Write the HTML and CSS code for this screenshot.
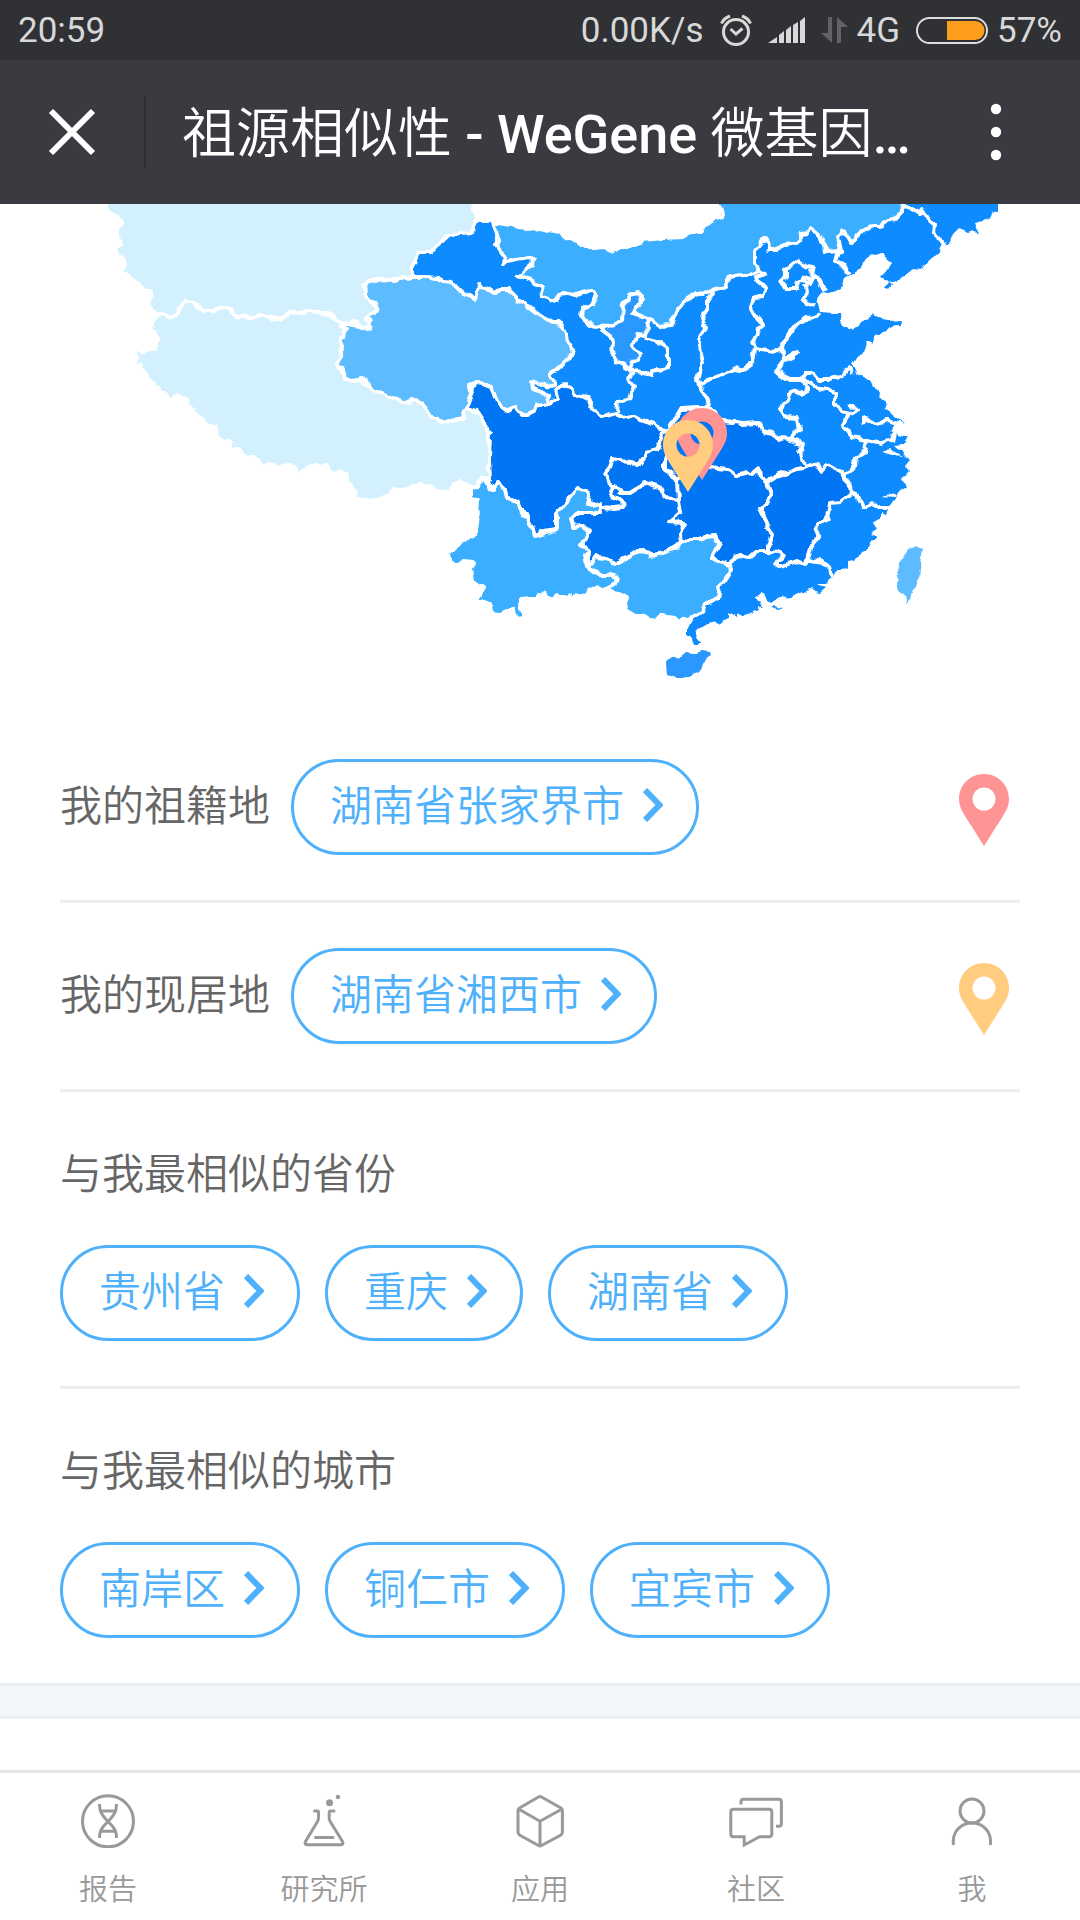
FILE: index.html
```html
<!DOCTYPE html>
<html lang="zh-CN">
<head>
  <meta charset="UTF-8">
  <meta name="viewport" content="width=device-width, initial-scale=1">
  <title>祖源相似性 - WeGene 微基因</title>
  <link rel="stylesheet" href="styles.css">
</head>
<body>
  <svg class="defs" aria-hidden="true">
    <symbol id="pin" viewBox="0 0 50 72">
      <path fill="currentColor" fill-rule="evenodd" d="M25 0C11 0 0 11 0 25C0 32 3 37 6 42L25 72L44 42C47 37 50 32 50 25C50 11 39 0 25 0ZM25 13.500A11.500 11.500 0 1 1 25 36.500A11.500 11.500 0 1 1 25 13.500Z"/>
    </symbol>
    <symbol id="chevron" viewBox="0 0 20 34">
      <path fill="none" stroke="currentColor" stroke-width="6" d="M2 2L16.500 17L2 32"/>
    </symbol>
    <!-- rough edges for coast and borders -->
    <filter id="rough" x="0" y="0" width="1" height="1">
      <feTurbulence type="fractalNoise" baseFrequency="0.12" numOctaves="1" seed="4"/>
      <feDisplacementMap in="SourceGraphic" scale="8" xChannelSelector="R" yChannelSelector="G"/>
    </filter>
  </svg>

  <div class="status">
    <span>20:59</span>
    <div class="status-right">
      <span>0.00K/s</span>
      <svg width="32" height="32" viewBox="0 0 32 32" fill="none" stroke="#d8d8d8" stroke-width="3">
        <circle cx="16" cy="18" r="12.500"/>
        <path d="M10.500 15L16 20L22.500 14.500"/>
        <path d="M1.500 9.500C3 6 6 3.500 10 2M30.500 9.500C29 6 26 3.500 22 2"/>
      </svg>
      <svg width="37" height="26" viewBox="0 0 37 26" fill="#d8d8d8">
        <path d="M0 26L9 20V26ZM11 26V18L16 14V26ZM18 26V13L23 9V26ZM25 26V8L30 5V26ZM32 26V4L37 0V26Z"/>
      </svg>
      <div class="status-group">
        <svg width="27" height="26" viewBox="0 0 27 26" fill="#626366">
          <path d="M7 0H11V26L0 16H7ZM16 26V0L27 10H20V26Z"/>
        </svg>
        <span>4G</span>
      </div>
      <div class="status-group">
        <svg width="72" height="27" viewBox="0 0 72 27">
          <rect x="1" y="1" width="70" height="25" rx="12.500" fill="none" stroke="#dcdedb" stroke-width="2"/>
          <path fill="#ff9d1c" d="M31 4H59A9.500 9.500 0 0 1 59 23H31Z"/>
        </svg>
        <span>57%</span>
      </div>
    </div>
  </div>

  <header class="topbar">
    <button class="close" aria-label="关闭">
      <svg width="48" height="48" viewBox="0 0 48 48" stroke="#fff" stroke-width="6"><path d="M3 3L45 45M45 3L3 45"/></svg>
    </button>
    <h1>祖源相似性 <b>- WeGene</b> 微基因<b>…</b></h1>
    <button class="more" aria-label="更多">
      <svg width="12" height="58" viewBox="0 0 12 58" fill="#fff"><circle cx="6" cy="6" r="5.200"/><circle cx="6" cy="29" r="5.200"/><circle cx="6" cy="52" r="5.200"/></svg>
    </button>
  </header>

  <main>
    <svg class="map" viewBox="0 204 1080 510" role="img" aria-label="祖源相似性地图">
      <g filter="url(#rough)">
      <!-- east, north-west corridor and coast -->
      <path class="lv4 plain" d="M413 277L413 265L418 253L430 253L447 237L472 233L475 222L494 222L520 250L600 270L700 260L800 225L900 196L998 196L998 204L997 210L993 212L990 218L983 221L975 223L977 228L979 232L973 231L968 233L958 229L953 234L950 242L944 247L933 257L925 264L922 270L913 269L908 273L897 280L893 282L884 281L881 277L887 270L892 262L886 257L882 254L877 256L870 255L866 259L862 268L855 272L845 278L841 288L833 292L828 293L822 292L817 298L818 306L822 312L833 313L840 313L842 318L841 327L850 330L860 327L861 322L867 319L873 315L881 319L887 321L902 320L901 327L895 325L887 329L880 334L874 335L872 344L866 341L865 348L857 358L853 365L858 375L865 378L872 382L877 392L885 404L886 410L894 415L904 423L896 425L890 431L898 435L908 438L903 444L894 445L900 450L905 456L911 460L905 467L909 472L903 478L907 486L900 490L896 497L888 508L885 515L880 513L880 519L873 523L877 529L870 533L877 536L870 545L865 552L860 553L855 561L847 562L847 567L841 570L833 577L829 579L825 584L818 584L826 587L820 592L810 590L800 593L792 597L780 598L773 602L767 600L763 594L758 596L755 598L764 606L758 606L758 611L743 617L738 612L736 617L730 612L730 619L718 623L711 622L703 626L698 630L694 633L697 638L701 643L695 643L691 638L688 635L688 628L692 620L700 580L600 540L520 450L490 370Z"/>
      <path class="lv4 plain" d="M885 288L889 282L892 284L889 288Z"/>

      <!-- Xinjiang -->
      <path class="lv0" d="M107 194L107 214L112 215L117 217L122 223L119 229L118 236L120 243L117 246L105 245L115 249L119 256L124 260L125 266L122 271L129 276L133 281L140 286L146 290L151 290L149 306L154 311L158 315L166 315L172 318L177 313L178 309L187 301L191 304L198 307L204 311L213 311L217 308L223 307L231 309L233 314L240 316L250 318L257 316L267 316L275 318L283 318L290 313L300 312L312 312L323 314L332 316L338 321L345 324L353 322L361 326L369 329L371 322L367 318L369 314L378 311L376 306L373 302L366 295L365 284L373 281L388 280L400 279L413 277L413 265L418 253L430 253L436 246L447 237L460 234L472 233L473 226L475 222L479 218L472 210L471 194Z"/>
      <!-- Tibet -->
      <path class="lv0" d="M158 315L166 315L172 318L177 313L178 309L187 301L191 304L198 307L204 311L213 311L217 308L223 307L231 309L233 314L240 316L250 318L257 316L267 316L275 318L283 318L290 313L300 312L312 312L323 314L332 316L338 321L345 324L342 327L347 330L344 335L339 338L342 347L341 357L337 362L341 368L345 377L352 381L363 379L366 384L373 391L382 393L390 396L398 400L407 402L417 400L423 404L428 410L432 418L443 422L448 420L453 421L463 417L467 408L478 412L485 423L486 429L490 433L489 460L490 480L483 478L478 486L470 487L460 481L453 487L450 492L445 494L430 487L420 485L408 489L395 491L390 493L380 500L364 499L353 499L355 491L352 485L346 484L347 476L338 473L330 472L325 466L318 465L308 467L293 478L296 470L292 465L278 466L265 465L259 460L250 457L248 460L243 455L239 449L231 449L231 443L223 442L216 434L217 428L212 425L205 425L203 419L193 412L187 402L182 397L174 395L168 401L164 394L155 387L155 383L145 376L140 366L134 365L138 358L135 350L137 346L143 352L155 349L158 338L151 330L152 321Z"/>
      <!-- Qinghai -->
      <path class="lv1" d="M345 324L353 325L361 326L369 329L371 322L367 318L369 314L378 311L376 306L373 302L366 295L365 284L373 281L388 280L400 279L413 277L425 277L438 278L443 281L452 282L458 289L463 293L470 296L476 300L479 285L486 288L495 293L500 290L508 290L518 300L527 306L530 307L542 316L553 322L558 322L565 330L568 342L573 350L570 357L567 360L558 368L549 375L555 383L547 387L532 381L533 389L540 391L547 397L548 403L537 405L535 412L523 416L515 407L511 408L508 411L497 402L491 387L484 384L477 383L470 385L472 393L468 402L467 408L463 417L453 421L448 420L443 422L432 418L428 410L423 404L417 400L407 402L398 400L390 396L382 393L373 391L366 384L363 379L352 381L345 377L341 368L337 362L341 357L342 347L339 338L344 335L347 330L342 326Z"/>
      <!-- Inner Mongolia -->
      <path class="lv2" d="M493 222L510 225L527 228L537 227L548 230L560 232L567 238L580 242L593 248L603 247L613 251L628 245L643 240L663 238L683 237L692 233L700 232L710 222L723 215L722 210L717 204L717 194L902 194L903 212L896 218L887 221L880 226L873 226L860 233L856 237L852 243L848 238L842 232L838 237L841 251L826 252L825 246L821 238L817 233L811 229L808 233L800 234L800 241L792 244L785 245L775 250L769 250L768 239L760 243L754 252L754 260L759 271L750 275L742 275L730 277L725 287L712 290L704 295L695 293L689 299L683 303L677 310L675 315L672 325L658 326L650 320L642 317L633 313L638 306L642 300L638 293L630 295L624 304L622 321L612 325L600 327L595 328L582 317L583 308L592 304L597 297L593 290L585 291L577 295L568 293L560 295L555 302L543 296L542 287L529 280L518 276L526 270L533 265L534 259L530 258L515 260L503 263L504 257L497 245L499 241Z"/>
      <!-- Ningxia -->
      <path class="lv3" d="M602 328L612 325L622 321L623 307L630 295L638 293L642 300L633 313L642 317L650 320L647 325L646 335L636 334L633 347L639 353L638 360L633 361L630 368L618 363L612 355L613 342L610 336L602 330Z"/>
      <!-- Sichuan, Chongqing, Guizhou, Hubei, Hunan, Jiangxi -->
      <path class="lv5" d="M467 408L468 402L472 393L470 385L477 383L484 384L491 387L497 402L508 411L511 408L515 407L523 416L535 412L537 405L548 403L558 400L555 389L567 384L573 393L580 396L589 397L592 410L602 417L615 413L622 418L633 416L640 420L647 422L658 427L667 430L675 420L682 408L697 407L710 407L717 416L725 422L742 424L758 423L762 432L773 434L780 438L788 439L802 443L800 453L803 460L806 467L817 463L820 471L827 465L835 469L842 472L845 480L851 486L852 493L840 502L830 503L827 517L818 523L817 538L810 548L807 560L805 564L798 561L790 563L780 567L774 563L785 556L780 553L768 552L755 552L748 558L740 556L735 558L730 565L720 562L712 558L716 550L720 543L717 541L715 535L708 536L700 539L690 539L682 543L674 548L663 553L650 556L645 551L637 550L628 556L617 563L605 559L597 558L587 567L588 552L582 543L589 532L583 526L573 527L571 517L578 513L600 513L602 503L590 505L587 490L577 489L568 500L557 513L557 530L545 532L535 535L528 520L517 502L508 498L504 489L499 481L492 490L488 483L490 480L489 460L490 433L486 429L485 423L478 412Z"/>
      <!-- Yunnan -->
      <path class="lv2" d="M470 487L478 486L483 478L488 483L492 490L499 481L504 489L508 498L517 502L528 520L535 535L545 532L557 530L557 513L568 500L577 489L587 490L590 505L602 503L600 513L578 513L571 517L573 527L583 526L589 532L582 543L588 552L585 560L587 567L600 575L609 575L617 577L615 584L604 590L598 587L587 593L586 596L579 595L572 600L568 595L562 599L557 596L552 600L546 595L540 594L537 598L530 598L523 599L520 603L523 619L516 620L513 610L500 614L491 610L490 604L477 600L484 587L473 582L471 569L474 563L463 562L451 565L449 553L455 547L463 541L475 533L478 501L470 497Z"/>
      <!-- Guangxi -->
      <path class="lv2" d="M587 567L597 558L605 559L617 563L628 556L637 550L645 551L650 556L663 553L674 548L682 543L690 539L700 539L708 536L715 535L717 541L720 543L716 550L712 558L720 562L730 565L731 570L726 578L720 587L718 597L705 605L702 611L693 617L685 618L680 622L675 618L667 617L663 616L657 618L650 621L643 616L635 616L625 610L627 598L620 595L604 590L615 584L617 577L609 575L600 575Z"/>
      <!-- Hainan, Taiwan, Hong Kong -->
      <path class="lv3 plain" d="M666 663L673 657L680 656L685 653L692 654L702 651L710 652L711 655L706 658L703 664L697 673L690 677L683 680L676 678L667 675Z"/>
      <path class="lv1 plain" d="M917 546L923 548L922 556L919 567L918 581L915 588L910 594L909 603L905 597L899 592L896 583L898 578L896 572L900 564L905 555L908 549Z"/>
      <path class="lv3 plain" d="M771 608L775 605L783 607L780 609Z"/>

      <!-- borders between provinces of the same level -->
      <g class="borders">
        <path d="M902 205L911 208L920 214L923 210L929 220L935 225L934 233L940 239L944 244L941 250"/>
        <path d="M838 251L835 261L841 264L846 269L850 274"/>
        <path d="M759 271L765 274L756 277L757 281L766 287L763 297L755 298L751 308L755 315L762 325L758 333L752 343L755 348L768 350L783 352L782 345L788 336L793 329L798 323L806 318L817 317L820 312"/>
        <path d="M755 348L753 363L742 370L733 369L725 373L712 379L698 383"/>
        <path d="M713 292L708 300L708 308L702 317L705 327L699 340L701 352L703 363L697 382L703 393L707 397L710 403L705 408L682 409"/>
        <path d="M783 352L784 360L790 356L797 352L793 357L784 361L776 372L790 380L802 380L805 373L812 373L818 380L828 380L833 377L837 380L843 377L846 369L850 367L852 373"/>
        <path d="M802 380L808 391L800 393L792 390L788 400L780 410L786 417L797 418L799 430L790 438"/>
        <path d="M803 378L815 387L828 389L835 393L835 403L841 411L849 413L843 425L853 437L867 440L882 443L892 440L895 430"/>
        <path d="M849 407L854 406L857 411L851 415"/>
        <path d="M864 423L866 418L877 424L887 421L904 425"/>
        <path d="M867 440L865 452L856 458L855 467L842 475"/>
        <path d="M852 493L857 495L862 507L868 507L873 503L878 508L890 508"/>
        <path d="M808 559L822 562L829 568L832 577"/>
        <path d="M803 278L797 282L799 288L785 288L781 281L785 277L785 270L798 260L806 266L813 267L811 274L818 278L825 291"/>
        <path d="M803 279L812 278L809 284L801 280M805 285L807 292L803 300L808 303L815 306"/>
        <path d="M646 337L656 341L668 348L668 368L653 371L652 375L643 373L633 372L629 380L633 387L630 400L618 402L617 412M630 368L633 372"/>
        <path d="M667 430L663 433L657 450L647 453L638 466L630 462L620 461L613 459L610 467L605 473L609 482L613 485L610 495L622 501L623 507L613 508L602 507"/>
        <path d="M613 485L622 489L620 493L630 493L638 488L647 482L652 485L660 487L663 494L668 498L677 500"/>
        <path d="M680 455L665 458L665 470L670 473L677 480L678 500L680 513L669 522L683 523L680 533L681 543"/>
        <path d="M677 480L695 466L710 467L727 469L737 475L748 472L752 475L759 468L760 478L767 483L772 497L760 508L767 523L772 535L768 545L768 552"/>
        <path d="M767 482L775 477L787 473L794 470L806 467"/>
      </g>
      <path fill="#fff" d="M882 452L890 449L903 456L892 455ZM879 496L897 493L896 497ZM846 318L859 318L858 325L846 326Z"/>
      </g>

      <use href="#pin" class="pin-home" x="677" y="408" width="50" height="72"/>
      <use href="#pin" class="pin-now" x="663" y="420" width="50" height="72"/>
    </svg>

    <div class="content">
      <div class="row">
        <span>我的祖籍地</span>
        <button class="pill">湖南省张家界市<svg class="chevron"><use href="#chevron"/></svg></button>
        <svg class="pin pin-home"><use href="#pin"/></svg>
      </div>
      <div class="row">
        <span>我的现居地</span>
        <button class="pill">湖南省湘西市<svg class="chevron"><use href="#chevron"/></svg></button>
        <svg class="pin pin-now"><use href="#pin"/></svg>
      </div>
      <section>
        <h2>与我最相似的省份</h2>
        <div class="pills">
          <button class="pill">贵州省<svg class="chevron"><use href="#chevron"/></svg></button>
          <button class="pill">重庆<svg class="chevron"><use href="#chevron"/></svg></button>
          <button class="pill">湖南省<svg class="chevron"><use href="#chevron"/></svg></button>
        </div>
      </section>
      <section>
        <h2>与我最相似的城市</h2>
        <div class="pills">
          <button class="pill">南岸区<svg class="chevron"><use href="#chevron"/></svg></button>
          <button class="pill">铜仁市<svg class="chevron"><use href="#chevron"/></svg></button>
          <button class="pill">宜宾市<svg class="chevron"><use href="#chevron"/></svg></button>
        </div>
      </section>
    </div>
    <div class="divider"></div>
  </main>

  <nav class="tabs">
    <a href="#report">
      <svg viewBox="0 0 54 54"><circle cx="27" cy="27.300" r="25.500"/><path d="M18.500 10C18.500 19 22 22 27 27.500S35.500 35 35.500 44M35.500 10C35.500 19 32 22 27 27.500S18.500 35 18.500 44M20 17H34M20 37.300H34"/></svg>
      报告
    </a>
    <a href="#lab">
      <svg viewBox="0 0 54 54"><path stroke-linecap="round" stroke-linejoin="round" d="M17.500 17H20.500Q21.500 17 21.500 18V24Q21.500 26 20.500 27.500L8.500 47.500Q7 50.700 10.500 50.700H43.500Q47 50.700 45.500 47.500L33.200 27.500Q32.200 26 32.200 24V18Q32.200 17 33.200 17H37M18.500 43.500H36"/><circle cx="32.500" cy="8.700" r="3.500" class="solid"/><circle cx="41" cy="3" r="2.200" class="solid"/></svg>
      研究所
    </a>
    <a href="#apps">
      <svg viewBox="0 0 54 54"><path stroke-linejoin="round" d="M25.500 3Q27 2 28.500 3L48 14Q49.400 15 49.400 16.500V38Q49.400 40 48 41L28.500 51.500Q27 52.500 25.500 51.500L6.500 41Q5 40 5 38V16.500Q5 15 6.500 14ZM5.500 15L27 27.300L49 15M27 27.300V52"/></svg>
      应用
    </a>
    <a href="#community">
      <svg viewBox="0 0 54 54"><path d="M4.500 15.300H40Q42.800 15.300 42.800 18V40Q42.800 42.700 40 42.700H30.500L15.200 51V42.700H4.500Q1.800 42.700 1.800 40V18Q1.800 15.300 4.500 15.300ZM12 10.500V8Q12 5.300 14.700 5.300H49.700Q52.400 5.300 52.400 8V29.500Q52.400 32.300 49.700 32.300H47"/></svg>
      社区
    </a>
    <a href="#me">
      <svg viewBox="0 0 54 54"><circle cx="27" cy="17" r="12"/><path d="M8.300 51V47C8.300 36.500 17 29 27 29S45.500 36.500 45.500 47V51"/></svg>
      我
    </a>
  </nav>
</body>
</html>
```
FILE: styles.css
```css
* { box-sizing: border-box; }
body {
  margin: 0;
  min-height: 100vh;
  display: flex;
  flex-direction: column;
  background: #fff;
  color: #666;
  font-family: Roboto, "Noto Sans CJK SC", sans-serif;
  font-size: 42px;
  font-weight: 350;
}
button {
  padding: 0;
  border: none;
  background: none;
  font: inherit;
  color: inherit;
  cursor: pointer;
}
h1, h2 { margin: 0; }
svg { flex: none; }
.defs { position: absolute; width: 0; height: 0; }

/* status bar */
.status {
  display: flex;
  justify-content: space-between;
  align-items: center;
  height: 60px;
  padding: 0 18px;
  background: #303135;
  color: #d8d8d8;
  font-size: 35px;
  font-weight: 400;
}
.status-right { display: flex; align-items: center; gap: 16px; }
.status-group { display: flex; align-items: center; gap: 9px; }

/* title bar */
.topbar {
  display: flex;
  align-items: center;
  height: 144px;
  background: #3a3b40;
  color: #fff;
}
.topbar button { display: flex; justify-content: center; align-items: center; }
.topbar .close { width: 146px; height: 72px; border-right: 2px solid #2e2f33; }
.topbar .more { width: 168px; height: 72px; }
.topbar h1 {
  flex: 1;
  padding: 6px 0 0 36px;
  font-size: 54px;
  font-weight: 350;
  line-height: 72px;
  white-space: nowrap;
}
.topbar b { font-weight: 500; }

/* map */
main { flex: 1; }
.map { display: block; width: 100%; }
.map path { stroke-linejoin: round; }
.lv0, .lv1, .lv2, .lv3, .lv5 { stroke: #fff; stroke-width: 4; }
.lv0 { fill: #d3f0ff; }
.lv1 { fill: #5cbcff; }
.lv2 { fill: #3caeff; }
.lv3 { fill: #2b98ff; }
.lv4 { fill: #0d8bff; }
.lv5 { fill: #0076f5; }
.map .plain { stroke: none; }
.borders { fill: none; stroke: #fff; stroke-width: 4; }
#rough { color-interpolation-filters: sRGB; }
.pin-home { color: #ff9494; }
.pin-now { color: #ffcc80; }

/* results */
.content { padding: 0 60px; }
.row {
  display: flex;
  align-items: center;
  gap: 21px;
  padding: 45px 0;
  border-bottom: 3px solid #ebeff2;
  line-height: 72px;
}
.pin { width: 50px; height: 72px; margin: 6px 11px 0 auto; }
section { padding: 45px 0; }
section + section { border-top: 3px solid #ebeff2; }
h2 {
  margin-bottom: 34px;
  padding-top: 2px;
  font-size: 42px;
  font-weight: inherit;
  line-height: 72px;
}
.pills { display: flex; flex-wrap: wrap; gap: 25px; }
.pill {
  display: flex;
  align-items: center;
  gap: 19px;
  height: 96px;
  padding: 0 33px 0 36px;
  border: 3px solid #4fb1fb;
  border-radius: 48px;
  color: #4fb1fb;
  line-height: 72px;
}
.chevron { width: 20px; height: 34px; margin-bottom: 4px; }
.divider {
  height: 36px;
  border: solid #ebeff2;
  border-width: 3px 0;
  background: #f3f7fa;
}

/* bottom tabs */
.tabs {
  display: flex;
  height: 150px;
  border-top: 3px solid #e2e6e9;
}
.tabs a {
  flex: 1;
  display: flex;
  flex-direction: column;
  align-items: center;
  gap: 24px;
  padding-top: 21px;
  color: #999;
  font-size: 29px;
  line-height: 36px;
  text-decoration: none;
}
.tabs svg {
  width: 54px;
  height: 54px;
  fill: none;
  stroke: #999;
  stroke-width: 3;
}
.tabs .solid { fill: #999; stroke: none; }
```
